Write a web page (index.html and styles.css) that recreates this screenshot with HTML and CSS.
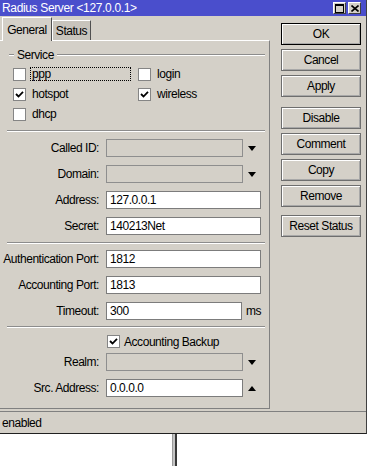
FILE: index.html
```html
<!DOCTYPE html>
<html>
<head>
<meta charset="utf-8">
<link rel="stylesheet" href="styles.css">
</head>
<body>
<div class="window">
  <div class="titlebar">
    <span class="title">Radius Server &lt;127.0.0.1&gt;</span>
    <div class="tb-btns">
      <span class="tb-btn"><svg width="9" height="9" viewBox="0 0 9 9"><rect x="0.5" y="0.5" width="8" height="8" fill="none" stroke="#000"/><line x1="0" y1="1.5" x2="9" y2="1.5" stroke="#000"/></svg></span>
      <span class="tb-btn"><svg width="8" height="7" viewBox="0 0 8 7"><path d="M0.5 0.5L7.5 6.5M7.5 0.5L0.5 6.5" stroke="#000" stroke-width="1.6"/></svg></span>
    </div>
  </div>
  <div class="main">
    <div class="left">
      <div class="tabs">
        <div class="tab active">General</div>
        <div class="tab">Status</div>
      </div>
      <div class="panel">
        <div class="group-head"><span class="gline short"></span><span class="gtext">Service</span><span class="gline"></span></div>
        <div class="checks">
          <div class="chk"><span class="box"></span><span class="clabel focus">ppp</span></div>
          <div class="chk"><span class="box"></span><span class="clabel">login</span></div>
          <div class="chk"><span class="box"><svg width="9" height="9" viewBox="0 0 9 9"><path d="M1 4L3.5 6.5L8 1.8" fill="none" stroke="#000" stroke-width="1.8"/></svg></span><span class="clabel">hotspot</span></div>
          <div class="chk"><span class="box"><svg width="9" height="9" viewBox="0 0 9 9"><path d="M1 4L3.5 6.5L8 1.8" fill="none" stroke="#000" stroke-width="1.8"/></svg></span><span class="clabel">wireless</span></div>
          <div class="chk"><span class="box"></span><span class="clabel">dhcp</span></div>
        </div>
        <div class="sep sep1"></div>
        <div class="form form1">
          <label class="lbl">Called ID:</label>
          <div class="combo"><span class="inp dis"></span><span class="arrow down"></span></div>
          <label class="lbl">Domain:</label>
          <div class="combo"><span class="inp dis"></span><span class="arrow down"></span></div>
          <label class="lbl">Address:</label>
          <span class="inp wide">127.0.0.1</span>
          <label class="lbl">Secret:</label>
          <span class="inp wide">140213Net</span>
        </div>
        <div class="sep sep2"></div>
        <div class="form form2">
          <label class="lbl">Authentication Port:</label>
          <span class="inp wide">1812</span>
          <label class="lbl">Accounting Port:</label>
          <span class="inp wide">1813</span>
          <label class="lbl">Timeout:</label>
          <div class="combo"><span class="inp">300</span><span class="unit">ms</span></div>
        </div>
        <div class="sep sep3"></div>
        <div class="form form3">
          <span></span>
          <div class="chk single"><span class="box"><svg width="9" height="9" viewBox="0 0 9 9"><path d="M1 4L3.5 6.5L8 1.8" fill="none" stroke="#000" stroke-width="1.8"/></svg></span><span class="clabel">Accounting Backup</span></div>
          <label class="lbl">Realm:</label>
          <div class="combo"><span class="inp dis"></span><span class="arrow down"></span></div>
          <label class="lbl last">Src. Address:</label>
          <div class="combo last"><span class="inp">0.0.0.0</span><span class="arrow up"></span></div>
        </div>
      </div>
    </div>
    <div class="buttons">
      <div class="btn default">OK</div>
      <div class="btn">Cancel</div>
      <div class="btn">Apply</div>
      <div class="btn g2">Disable</div>
      <div class="btn">Comment</div>
      <div class="btn">Copy</div>
      <div class="btn">Remove</div>
      <div class="btn g3">Reset Status</div>
    </div>
  </div>
  <div class="status">enabled</div>
</div>
<div class="below"><div class="vbar"></div></div>
</body>
</html>
```

FILE: styles.css
```css
body {
  margin: 0;
  background: #fff;
  font-family: "Liberation Sans", Arial, sans-serif;
  font-size: 12px;
  letter-spacing: -0.45px;
  color: #000;
}
.window {
  width: 367px;
  height: 434px;
  box-sizing: border-box;
  background: #d4d0c8;
  border-right: 1px solid #404040;
  border-bottom: 1px solid #202020;
  display: flex;
  flex-direction: column;
}
.titlebar {
  height: 16px;
  flex: none;
  background: #4a4ecc;
  color: #fff;
  display: flex;
  align-items: center;
  justify-content: space-between;
  padding: 0 5px 0 2px;
  font-size: 12px;
  letter-spacing: -0.35px;
}
.tb-btns { display: flex; gap: 2px; }
.tb-btn {
  width: 13px;
  height: 12px;
  box-sizing: border-box;
  background: #d4d0c8;
  border: 1px solid;
  border-color: #fff #404040 #404040 #fff;
  display: flex;
  align-items: center;
  justify-content: center;
}
.tb-btn svg { display: block; }
.main { display: flex; height: 395px; flex: none; }
.left { width: 270px; display: flex; flex-direction: column; }
.tabs {
  height: 24px;
  display: flex;
  align-items: flex-end;
  padding-left: 2px;
  position: relative;
  z-index: 1;
}
.tab {
  height: 20px;
  width: 39px;
  box-sizing: border-box;
  border: 1px solid;
  border-color: #fff #505050 transparent #fff;
  border-bottom: none;
  display: flex;
  align-items: center;
  justify-content: center;
  background: #c8c4bc;
}
.tab.active {
  width: 50px;
  height: 24px;
  margin-bottom: -1px;
  background: #d4d0c8;
}
.panel {
  height: 369px;
  box-sizing: border-box;
  border-top: 1px solid #fff;
  border-right: 1px solid #808080;
  border-bottom: 1px solid #808080;
}
.group-head {
  margin-top: 7px;
  height: 14px;
  display: flex;
  align-items: center;
  padding: 0 4px 0 9px;
}
.gline {
  flex: 1;
  height: 0;
  border-top: 1px solid #8c8c8c;
  border-bottom: 1px solid #fff;
}
.gline.short { flex: none; width: 5px; }
.gtext { margin: 0 3px; }
.checks {
  margin-top: 2px;
  padding-left: 13px;
  display: grid;
  grid-template-columns: 125px auto;
  grid-auto-rows: 20px;
}
.chk { display: flex; align-items: center; }
.box {
  width: 13px;
  height: 13px;
  box-sizing: border-box;
  background: #fff;
  border: 1px solid #858585;
  display: flex;
  align-items: center;
  justify-content: center;
  flex: none;
}
.box svg { display: block; }
.clabel {
  margin-left: 4px;
  border: 1px solid transparent;
  padding: 0 1px;
  line-height: 12px;
}
.clabel.focus {
  width: 97px;
  border: 1px dotted #000;
}
.sep {
  height: 0;
  border-top: 1px solid #8c8c8c;
  border-bottom: 1px solid #fff;
  margin: 0 4px 0 7px;
}
.sep1 { margin-top: 6px; }
.sep2 { margin-top: 7px; }
.sep3 { margin-top: 6px; }
.form {
  display: grid;
  grid-template-columns: 100px 155px;
  column-gap: 6px;
  row-gap: 8px;
  grid-auto-rows: 18px;
  align-items: center;
}
.form1 { margin-top: 7px; }
.form2 { margin-top: 6px; }
.form3 {
  margin-top: 7px;
  grid-template-rows: 13px 18px 21px;
  row-gap: 5px;
}
.form3 .last { align-self: end; }
.lbl { text-align: right; padding-right: 1px; white-space: nowrap; line-height: 18px; }
.inp {
  height: 18px;
  box-sizing: border-box;
  border: 1px solid #7c7c7c;
  background: #fff;
  padding-left: 3px;
  line-height: 16px;
  width: 137px;
  display: block;
}
.inp.wide { width: 155px; }
.inp.dis { background: #d4d0c8; border-color: #8e8e8e; }
.combo { display: flex; align-items: center; height: 18px; }
.arrow {
  margin-left: 5px;
  width: 0;
  height: 0;
  border-left: 4.5px solid transparent;
  border-right: 4.5px solid transparent;
}
.arrow.down { border-top: 5px solid #000; }
.arrow.up { border-bottom: 5px solid #000; }
.unit { margin-left: 4px; }
.single { margin-left: 1px; }
.single .clabel { margin-left: 4px; border: none; padding: 0; }
.buttons {
  margin-left: 11px;
  width: 80px;
  padding-top: 7px;
  display: flex;
  flex-direction: column;
  gap: 4px;
}
.btn {
  height: 22px;
  box-sizing: border-box;
  border: 1px solid #6e6e6e;
  box-shadow: inset 1px 1px 0 #fff, inset -1px -1px 0 #a8a8a8;
  display: flex;
  align-items: center;
  justify-content: center;
}
.btn.default { border-color: #000; }
.btn.g2 { margin-top: 6px; }
.btn.g3 { margin-top: 4px; }
.status {
  height: 22px;
  box-sizing: border-box;
  border-top: 1px solid #808080;
  padding-left: 2px;
  display: flex;
  align-items: center;
}
.below { height: 32px; }
.vbar {
  margin-left: 172px;
  width: 2px;
  height: 32px;
  background: #c4c4c4;
  border-left: 1px solid #9a9a9a;
  border-right: 2px solid #383838;
}
```
